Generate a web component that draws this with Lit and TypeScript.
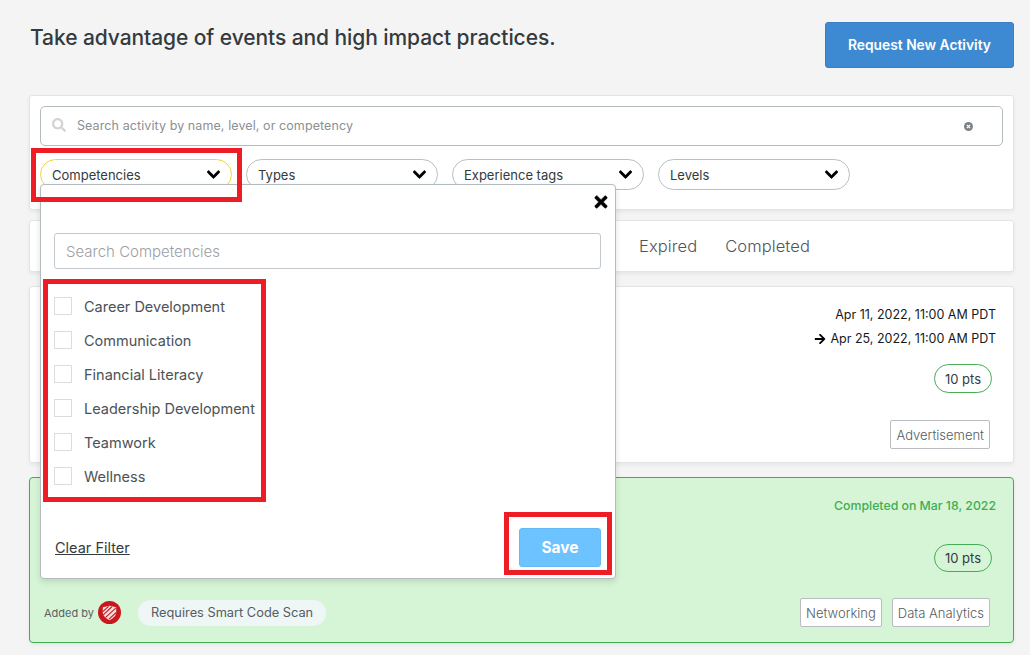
import { LitElement, html, css } from "lit";
import { customElement } from "lit/decorators.js";

const chevron = html`<svg class="chev" viewBox="0 0 448 512"><path d="M207.029 381.476L12.686 187.132c-9.373-9.373-9.373-24.569 0-33.941l22.667-22.667c9.357-9.357 24.522-9.375 33.901-.04L224 284.505l154.745-154.021c9.379-9.335 24.544-9.317 33.901.04l22.667 22.667c9.373 9.373 9.373 24.569 0 33.941L240.971 381.476c-9.373 9.372-24.569 9.372-33.942 0z"/></svg>`;

@customElement("app-root")
export class AppRoot extends LitElement {
  static styles = css`
    :host { display: block; position: relative; width: 1030px; height: 655px; overflow: hidden; background: #f4f4f4; font-family: "Inter", "Liberation Sans", sans-serif; color: #3d4650; }
    .page { padding: 22px 16px 0 29px; display: flex; flex-direction: column; }
    .head { display: flex; justify-content: space-between; align-items: flex-start; height: 73px; }
    .title { margin: 3px 0 0 1px; font-size: 21px; font-weight: 500; line-height: 26px; color: #333a40; letter-spacing: -.08px; }
    .request { width: 189px; height: 46px; box-sizing: border-box; border: 1px solid #3a7fc4; border-radius: 3px; background: #3e8ad2; color: #fff; font: 600 13.8px "Inter", sans-serif; display: flex; align-items: center; justify-content: center; }
    .card { background: #fff; border: 1px solid #e4e4e4; border-radius: 3px; box-sizing: border-box; box-shadow: 0 2px 4px rgba(0,0,0,.06); }
    .filters { height: 115px; padding: 10px; display: flex; flex-direction: column; gap: 13px; margin-bottom: 10px; }
    .search { height: 40px; box-sizing: border-box; border: 1px solid #b4bcc0; border-radius: 5px; display: flex; align-items: center; padding: 0 29px 2px 11px; font-size: 12.5px; letter-spacing: .09px; color: #8b9094; }
    .search .mag { width: 14px; height: 14px; fill: #d2d4d6; margin-right: 11px; }
    .search .txt { flex: 1; }
    .search .clear { width: 9px; height: 9px; margin-top: 2px; }
    .pills { display: flex; gap: 14px; }
    .pill { width: 192px; height: 31px; box-sizing: border-box; border: 1px solid #b9c0c3; border-radius: 16px; background: #fff; display: flex; justify-content: space-between; align-items: center; padding: 1px 11px 0 11px; font-size: 13px; color: #333a40; }
    .pill.on { border-color: #f5d33c; }
    .chev { width: 13px; height: 15px; fill: #000; stroke: #000; stroke-width: 24; margin-top: -2px; }
    .tabs { height: 52px; margin-bottom: 14px; display: flex; align-items: center; gap: 28px; padding-left: 609px; font-size: 16.5px; letter-spacing: .1px; font-weight: 300; color: #4e555c; }
    .activity { height: 177px; margin-bottom: 14px; padding: 16px 17px 0 0; display: flex; flex-direction: column; align-items: flex-end; position: relative; }
    .date { font-size: 12.5px; line-height: 24px; color: #16191c; display: flex; align-items: center; gap: 4px; }
    .date svg { width: 12px; height: 12px; }
    .pts { margin: 13px 4px 0 0; width: 58px; height: 29px; box-sizing: border-box; border: 1px solid #45ad55; border-radius: 15px; font-size: 13px; color: #333a40; display: flex; align-items: center; justify-content: center; }
    .tag { height: 29px; box-sizing: border-box; padding: 0 5px; background: #fff; border: 1px solid #b9bcc0; border-radius: 2px; font-size: 13px; font-weight: 300; color: #555c62; display: flex; align-items: center; }
    .tagrow { margin: 27px 6px 0 0; display: flex; gap: 10px; }
    .done { height: 166px; background: #d6f5d6; border-color: #3fae52; padding: 19px 17px 0 14px; border-radius: 4px; }
    .done .right { display: flex; flex-direction: column; align-items: flex-end; }
    .cdate { font-size: 12.3px; line-height: 17px; color: #3fae52; font-weight: 500; }
    .done .pts { margin: 30px 4px 0 0; height: 28px; }
    .bottom { display: flex; justify-content: space-between; align-items: center; margin-top: 26px; padding-right: 6px; }
    .added { display: flex; align-items: center; font-size: 11px; color: #5a6168; }
    .logo { width: 23px; height: 23px; margin: 0 17px 0 4px; }
    .scan { height: 26px; padding: 0 13px; border-radius: 13px; background: #eef6f6; font-size: 12.8px; color: #555c62; display: flex; align-items: center; margin-right: auto; }
    .tags { display: flex; gap: 10px; }
    .pop { position: absolute; left: 40px; top: 184px; width: 576px; height: 395px; box-sizing: border-box; background: #fff; border: 1px solid #b4bbbf; border-radius: 4px; box-shadow: 0 3px 6px rgba(0,0,0,.12); padding: 0 14px 0 13px; display: flex; flex-direction: column; }
    .close { align-self: flex-end; margin: 8px -7px 0 0; width: 14px; height: 18px; fill: #000; stroke: #000; stroke-width: 14; }
    .pinput { margin-top: 22px; height: 36px; box-sizing: border-box; border: 1px solid #c2c8cb; border-radius: 3px; padding: 0 11px; font-size: 15px; font-weight: 300; color: #9ba0a4; display: flex; align-items: center; }
    .list { margin-top: 21px; display: flex; flex-direction: column; }
    .item { height: 34px; display: flex; align-items: center; gap: 12px; font-size: 14.5px; font-weight: 400; color: #4b5258; padding-bottom: 1px; box-sizing: border-box; }
    .box { width: 18px; height: 18px; box-sizing: border-box; border: 1px solid #dcdcdc; background: #fff; margin-top: -2px; }
    .foot { margin-top: auto; display: flex; justify-content: space-between; align-items: center; padding: 0 0 11px 1px; }
    .clearf { font-size: 14.5px; color: #333a40; text-decoration: underline; }
    .save { width: 82px; height: 39px; border-radius: 3px; background: #6cc3ff; border: 1px solid #62bbf7; box-sizing: border-box; color: #fff; font-size: 15.5px; font-weight: 700; display: flex; align-items: center; justify-content: center; }
    .mark { position: absolute; box-sizing: border-box; border: 5px solid #ee1c25; pointer-events: none; }
    .m1 { left: 31px; top: 148px; width: 211px; height: 54px; }
    .m2 { left: 43px; top: 279px; width: 223px; height: 223px; }
    .m3 { left: 504px; top: 512px; width: 108px; height: 63px; }
  `;

  render() {
    const items = ["Career Development", "Communication", "Financial Literacy", "Leadership Development", "Teamwork", "Wellness"];
    return html`
      <div class="page">
        <div class="head">
          <h1 class="title">Take advantage of events and high impact practices.</h1>
          <div class="request">Request New Activity</div>
        </div>
        <div class="card filters">
          <div class="search">
            <svg class="mag" viewBox="0 0 512 512"><path d="M505 442.7L405.3 343c-4.5-4.5-10.6-7-17-7H372c27.6-35.3 44-79.7 44-128C416 93.1 322.9 0 208 0S0 93.1 0 208s93.1 208 208 208c48.3 0 92.7-16.4 128-44v16.3c0 6.4 2.5 12.5 7 17l99.7 99.7c9.4 9.4 24.6 9.4 33.9 0l28.3-28.3c9.4-9.4 9.4-24.6.1-34zM208 336c-70.7 0-128-57.2-128-128 0-70.7 57.2-128 128-128 70.7 0 128 57.2 128 128 0 70.7-57.2 128-128 128z"/></svg>
            <span class="txt">Search activity by name, level, or competency</span>
            <svg class="clear" viewBox="0 0 10 10"><circle cx="5" cy="5" r="5" fill="#7d8287"/><path d="M3.2 3.2l3.6 3.6M6.8 3.2L3.2 6.8" stroke="#fff" stroke-width="1.3"/></svg>
          </div>
          <div class="pills">
            <div class="pill on">Competencies ${chevron}</div>
            <div class="pill">Types ${chevron}</div>
            <div class="pill">Experience tags ${chevron}</div>
            <div class="pill">Levels ${chevron}</div>
          </div>
        </div>
        <div class="card tabs"><span>Expired</span><span>Completed</span></div>
        <div class="card activity">
          <div class="date">Apr 11, 2022, 11:00 AM PDT</div>
          <div class="date"><svg viewBox="0 0 448 512"><path d="M190.5 66.9l22.2-22.2c9.4-9.4 24.6-9.4 33.9 0L441 239c9.4 9.4 9.4 24.6 0 33.9L246.6 467.3c-9.4 9.4-24.6 9.4-33.9 0l-22.2-22.2c-9.5-9.5-9.3-25 .4-34.3L311.4 296H24c-13.3 0-24-10.7-24-24v-32c0-13.3 10.7-24 24-24h287.4L190.9 101.2c-9.8-9.3-10-24.8-.4-34.3z"/></svg>Apr 25, 2022, 11:00 AM PDT</div>
          <div class="pts">10 pts</div>
          <div class="tagrow"><div class="tag">Advertisement</div></div>
        </div>
        <div class="card done">
          <div class="right">
            <div class="cdate">Completed on Mar 18, 2022</div>
            <div class="pts">10 pts</div>
          </div>
          <div class="bottom">
            <div class="added">Added by
              <svg class="logo" viewBox="0 0 24 24">
                <circle cx="12" cy="12" r="12" fill="#c8171d"/>
                <path d="M5 6.500 L12 5 L19 6.500 V12 C19 15.500 15.800 18 12 20 C8.200 18 5 15.500 5 12 Z" fill="#f8dcdc"/>
                <path d="M5 11 L11 5.500 M5.500 14.500 L14.500 6 M8 17 L18.500 7.500 M11.500 19 L19 12" stroke="#c8171d" stroke-width="1.100"/>
              </svg>
            </div>
            <div class="scan">Requires Smart Code Scan</div>
            <div class="tags"><div class="tag">Networking</div><div class="tag">Data Analytics</div></div>
          </div>
        </div>
      </div>
      <div class="pop">
        <svg class="close" viewBox="0 0 352 512"><path d="M242.72 256l100.07-100.07c12.28-12.28 12.28-32.19 0-44.48l-22.24-22.24c-12.28-12.28-32.19-12.28-44.48 0L176 189.28 75.93 89.21c-12.28-12.28-32.19-12.28-44.48 0L9.21 111.45c-12.28 12.28-12.28 32.19 0 44.48L109.28 256 9.21 356.07c-12.28 12.28-12.28 32.19 0 44.48l22.24 22.24c12.28 12.28 32.2 12.28 44.48 0L176 322.72l100.07 100.07c12.28 12.28 32.2 12.28 44.48 0l22.24-22.24c12.28-12.28 12.28-32.19 0-44.48L242.72 256z"/></svg>
        <div class="pinput">Search Competencies</div>
        <div class="list">
          ${items.map((i) => html`<div class="item"><span class="box"></span>${i}</div>`)}
        </div>
        <div class="foot"><span class="clearf">Clear Filter</span><div class="save">Save</div></div>
      </div>
      <div class="mark m1"></div><div class="mark m2"></div><div class="mark m3"></div>
    `;
  }
}
